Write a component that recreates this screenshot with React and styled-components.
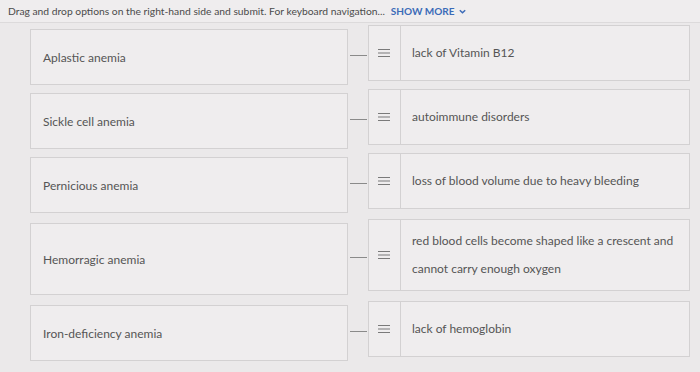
import React from "react";
import styled, { createGlobalStyle } from "styled-components";

const GlobalStyle = createGlobalStyle`
  html, body {
    margin: 0;
    padding: 0;
    background: #ebe9ea;
    font-family: Lato, "Liberation Sans", sans-serif;
  }
`;

const pairs = [
  { id: 1, term: "Aplastic anemia", match: ["lack of Vitamin B12"] },
  { id: 2, term: "Sickle cell anemia", match: ["autoimmune disorders"] },
  { id: 3, term: "Pernicious anemia", match: ["loss of blood volume due to heavy bleeding"] },
  {
    id: 4,
    term: "Hemorragic anemia",
    match: ["red blood cells become shaped like a crescent and", "cannot carry enough oxygen"],
    tall: true,
  },
  { id: 5, term: "Iron-deficiency anemia", match: ["lack of hemoglobin"] },
];

const App = () => {
  return (
    <Page>
      <GlobalStyle />
      <Header>
        <Instructions>
          Drag and drop options on the right-hand side and submit. For keyboard navigation...
        </Instructions>
        <ShowMore>
          SHOW MORE
          <svg width="9" height="9" viewBox="0 0 10 10">
            <path d="M2 3.5 L5 6.5 L8 3.5" fill="none" stroke="#3b6bb8" strokeWidth="1.6" />
          </svg>
        </ShowMore>
      </Header>
      <Rows>
        {pairs.map((item) => (
          <Row key={item.id} $tall={item.tall}>
            <TermBox>{item.term}</TermBox>
            <Connector />
            <MatchBox>
              <Handle>
                <svg width="12" height="10" viewBox="0 0 12 10">
                  <path d="M0 1.5 H12 M0 5 H12 M0 8.5 H12" stroke="#7a7a7a" strokeWidth="1.2" />
                </svg>
              </Handle>
              <MatchText>
                {item.match.map((line) => (
                  <span key={line}>{line}</span>
                ))}
              </MatchText>
            </MatchBox>
          </Row>
        ))}
      </Rows>
    </Page>
  );
};

const Page = styled.div`
  width: 700px;
  height: 372px;
  overflow: hidden;
`;

const Header = styled.div`
  display: flex;
  align-items: center;
  gap: 6px;
  height: 22px;
  padding-left: 8px;
  border-bottom: 1px solid #dcdadb;
  background: #efedee;
`;

const Instructions = styled.span`
  font-size: 10.3px;
  color: #4b4b4b;
`;

const ShowMore = styled.span`
  display: flex;
  align-items: center;
  gap: 3px;
  font-size: 10px;
  font-weight: 700;
  color: #3b6bb8;
`;

const Rows = styled.div`
  display: flex;
  flex-direction: column;
  gap: 4px;
  padding: 2px 10px 0 30px;
`;

const Row = styled.div`
  display: grid;
  grid-template-columns: 318px 20px 322px;
  height: ${(p) => (p.$tall ? "76px" : "60px")};
  margin: ${(p) => (p.$tall ? "2px 0 2px" : "0")};
`;

const TermBox = styled.div`
  display: flex;
  align-items: center;
  margin-top: 4px;
  padding-left: 12px;
  border: 1px solid #d3d1d2;
  background: #efedee;
  font-size: 12px;
  color: #555;
`;

const Connector = styled.div`
  align-self: center;
  height: 1px;
  margin: 1px 1px 0 2px;
  background: #8a8a8a;
`;

const MatchBox = styled.div`
  display: flex;
  margin-bottom: 4px;
  border: 1px solid #d3d1d2;
  background: #efedee;
`;

const Handle = styled.div`
  display: flex;
  align-items: center;
  justify-content: center;
  width: 29px;
  flex-shrink: 0;
  border-right: 1px solid #d3d1d2;
  padding-right: 2px;
`;

const MatchText = styled.div`
  display: flex;
  flex-direction: column;
  justify-content: center;
  padding-left: 11px;
  font-size: 12px;
  line-height: 28px;
  color: #555;
`;

export default App;
